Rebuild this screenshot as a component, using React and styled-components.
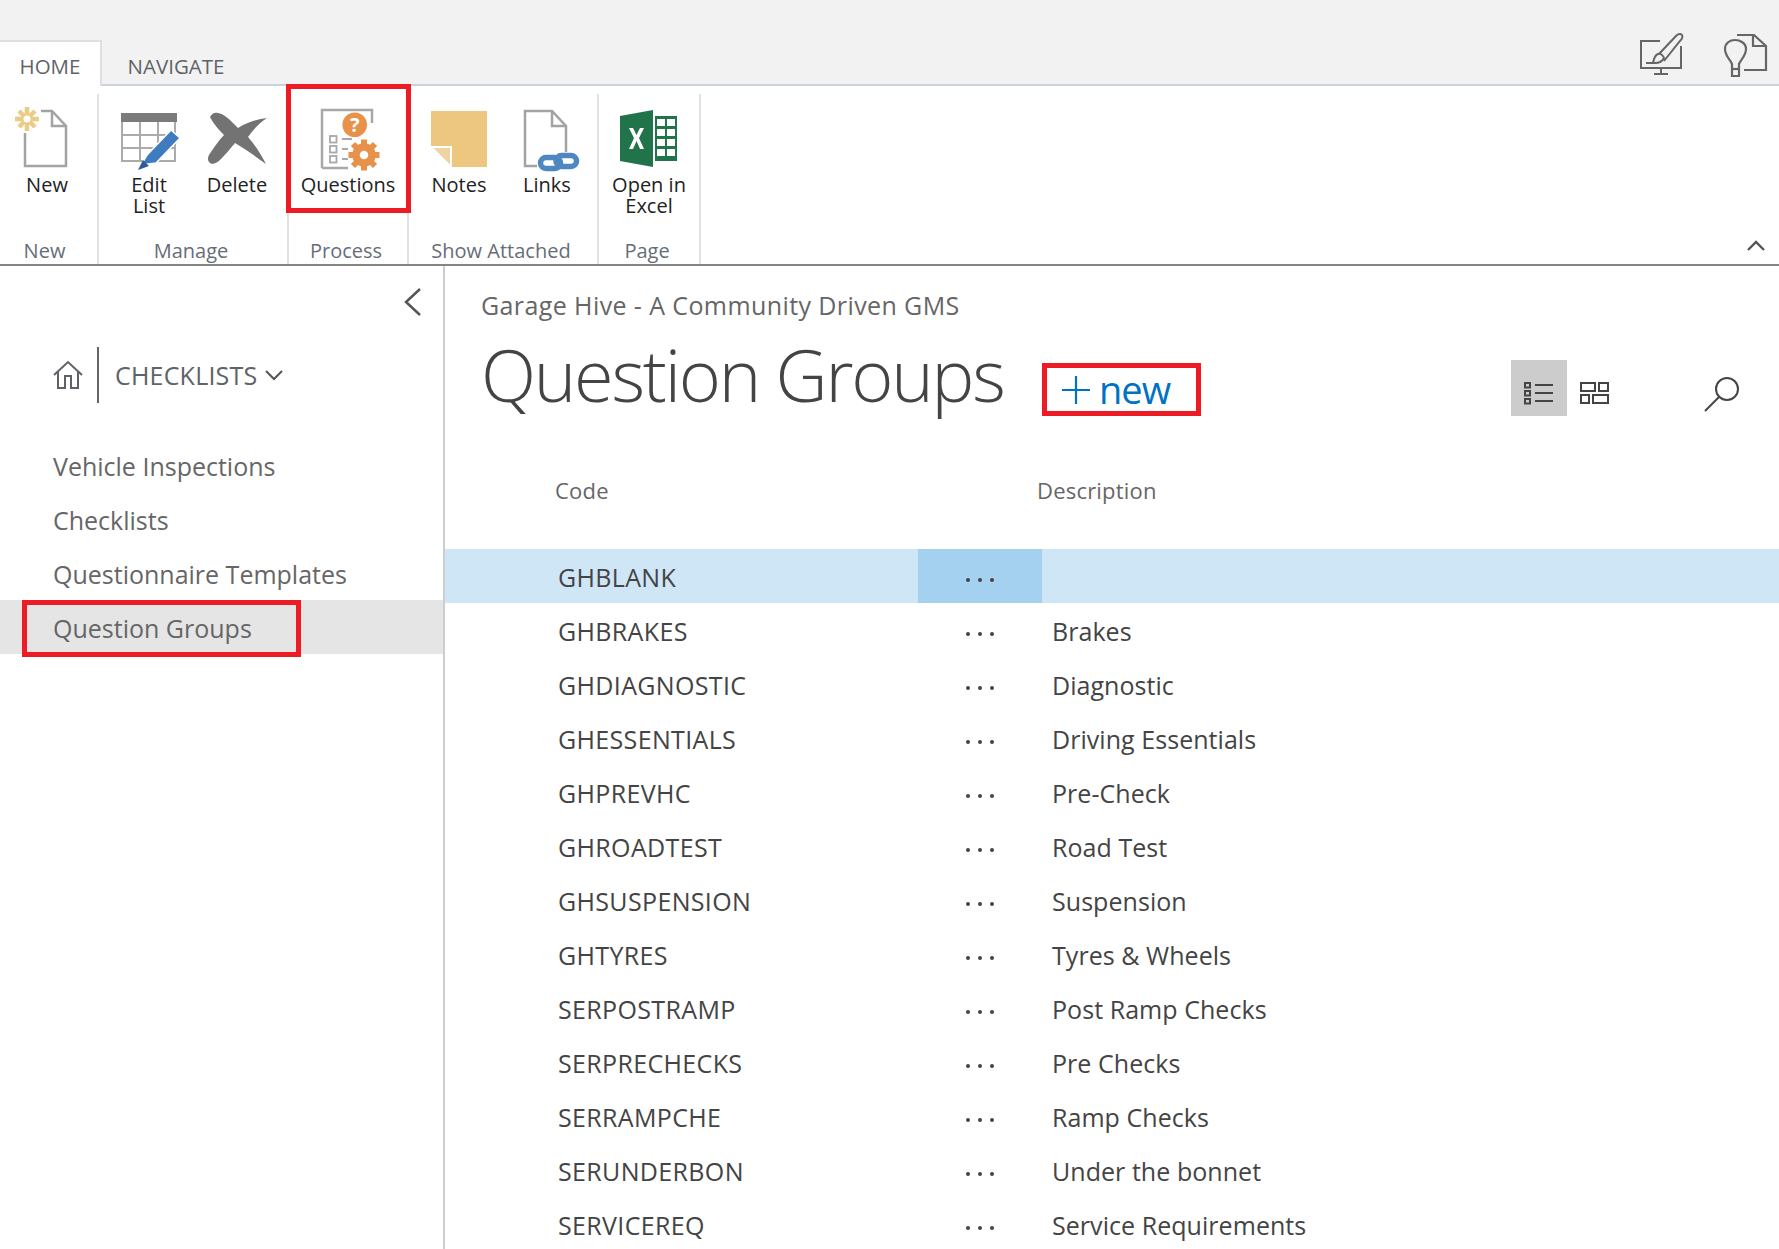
import styled, { createGlobalStyle } from "styled-components";

const GlobalStyle = createGlobalStyle`
  html, body {
    margin: 0;
    background: #fff;
    font-family: "Open Sans", "Liberation Sans", sans-serif;
    overflow: hidden;
  }
  * { box-sizing: border-box; }
  svg { overflow: visible; }
`;

const rows = [
  ["GHBLANK", ""],
  ["GHBRAKES", "Brakes"],
  ["GHDIAGNOSTIC", "Diagnostic"],
  ["GHESSENTIALS", "Driving Essentials"],
  ["GHPREVHC", "Pre-Check"],
  ["GHROADTEST", "Road Test"],
  ["GHSUSPENSION", "Suspension"],
  ["GHTYRES", "Tyres & Wheels"],
  ["SERPOSTRAMP", "Post Ramp Checks"],
  ["SERPRECHECKS", "Pre Checks"],
  ["SERRAMPCHE", "Ramp Checks"],
  ["SERUNDERBON", "Under the bonnet"],
  ["SERVICEREQ", "Service Requirements"],
];

const PageIcon = ({ children }) => (
  <svg width="60" height="62" viewBox="0 0 60 62" fill="none">
    <path d="M8 3H35L49 18V58H8Z" stroke="#a3a3a3" strokeWidth="2.5" />
    <path d="M35 3V18H49" stroke="#a3a3a3" strokeWidth="2.5" />
    {children}
  </svg>
);

const NewIcon = () => (
  <PageIcon>
    <rect x="-3" y="-1" width="27" height="26" fill="#fff" />
    <g stroke="#eccb86" strokeWidth="4.5">
      <path d="M10 -1V23M-2 11H22M2 3L18 19M18 3L2 19" />
    </g>
    <circle cx="10" cy="11" r="3.5" fill="#fff" />
  </PageIcon>
);

const LinksIcon = () => (
  <PageIcon>
    <rect x="20" y="44" width="43" height="19" fill="#fff" />
    <g fill="none" stroke="#4f87c1" strokeWidth="5.5">
      <rect x="23.5" y="49.5" width="20" height="11" rx="5.5" />
      <rect x="39" y="47.5" width="20.5" height="11" rx="5.5" />
    </g>
  </PageIcon>
);

const EditListIcon = () => (
  <svg width="62" height="60" viewBox="0 0 62 60" fill="none">
    <rect x="3" y="3" width="56" height="9" fill="#7b7b7b" />
    <path d="M4 12V51H57V12M4 25H57M4 38H57M22 12V51M40 12V51" stroke="#ababab" strokeWidth="2" />
    <path d="M23 55L29 45L53 20L62 28L38 53Z" fill="#3f7cbf" stroke="#fff" strokeWidth="1.5" />
    <path d="M20 60L25 50L31 56Z" fill="#2d5f96" />
  </svg>
);

const DeleteIcon = () => (
  <svg width="62" height="60" viewBox="0 0 62 60">
    <path
      d="M4 7C6 3 9 2 12 3C17 4 21 7 25 11L32 18C42 12 51 9 61 8C53 13 47 20 42 27C49 35 55 44 60 54C49 46 39 39 29 33C24 39 19 45 14 50C10 54 5 55 3 52C1 49 2 46 5 42C9 36 13 30 18 25C13 20 7 13 4 7Z"
      fill="#737373"
    />
  </svg>
);

const QuestionsIcon = () => (
  <svg width="60" height="64" viewBox="0 0 60 64" fill="none">
    <path d="M4 62V4H54V17M4 62H30" stroke="#a8a8a8" strokeWidth="2.5" />
    <g stroke="#a8a8a8" strokeWidth="1.8">
      <rect x="12" y="30" width="6.5" height="6.5" />
      <rect x="12" y="40" width="6.5" height="6.5" />
      <rect x="12" y="50" width="6.5" height="6.5" />
      <path d="M24 33H34M24 43H30M24 53H30" />
    </g>
    <circle cx="36.7" cy="18.7" r="12.3" fill="#e8914a" />
    <text x="36.7" y="26" textAnchor="middle" fontSize="20" fontWeight="700" fontFamily="Open Sans" fill="#fff">?</text>
    <circle cx="46" cy="49" r="8" stroke="#e8914a" strokeWidth="7.5" />
    <path
      d="M46 33.5V39M46 59V64.5M30.5 49H36M56 49H61.5M35 38L39 42M53 56L57 60M57 38L53 42M39 56L35 60"
      stroke="#e8914a"
      strokeWidth="6"
    />
  </svg>
);

const NotesIcon = () => (
  <svg width="58" height="60" viewBox="0 0 58 60">
    <path d="M1 1H57V57H22L1 37Z" fill="#edc77f" />
    <path d="M1 37H21V57Z" fill="#efd3a0" stroke="#fff" strokeWidth="2" />
  </svg>
);

const ExcelIcon = () => (
  <svg width="60" height="60" viewBox="0 0 60 60">
    <path d="M34 0V57L1 51V6Z" fill="#21734a" />
    <rect x="36" y="6" width="22" height="45" fill="#21734a" />
    <g fill="#fff">
      <rect x="38" y="9" width="8" height="7" />
      <rect x="48" y="9" width="8" height="7" />
      <rect x="38" y="19" width="8" height="7" />
      <rect x="48" y="19" width="8" height="7" />
      <rect x="38" y="29" width="8" height="7" />
      <rect x="48" y="29" width="8" height="7" />
      <rect x="38" y="39" width="8" height="7" />
      <rect x="48" y="39" width="8" height="7" />
    </g>
    <path d="M10 18L14 18L17.5 25L21 18L25 18L20 28L25 39H21L17.5 31L14 39H10L15 28Z" fill="#fff" />
  </svg>
);

const BrushIcon = () => (
  <svg width="44" height="44" viewBox="0 0 44 44" fill="none" stroke="#666" strokeWidth="2">
    <path d="M21 9H2V36H42V14M22 36V41M15 42H29" />
    <path d="M19 23L37 4C39 2 42 1 43 3C44 5 43 7 41 9L25 29" fill="#f2f2f2" />
    <path d="M7 31H16C22 31 24 28 25 26C24 23 21 21 19 22C16 23 15 26 14 31" fill="#f2f2f2" />
  </svg>
);

const BulbIcon = () => (
  <svg width="46" height="46" viewBox="0 0 46 46" fill="none" stroke="#666" strokeWidth="2.2">
    <path d="M14 3H31L43 14V38H21" />
    <path d="M30 3V14H43" />
    <path d="M9 32C7 27 2 24 2 17C2 11 7 8 12 8C17 8 23 11 23 17C23 24 18 27 16 32V44H9Z" fill="#f2f2f2" />
    <path d="M9 37H16" />
  </svg>
);

const HomeIcon = () => (
  <svg width="30" height="28" viewBox="0 0 30 28" fill="none" stroke="#5f6368" strokeWidth="2">
    <path d="M1 14L15 1L29 14M5 11V27H12V15H18V27H25V11" />
  </svg>
);

const ListViewIcon = () => (
  <svg width="30" height="24" viewBox="0 0 30 24" fill="none" stroke="#444" strokeWidth="2">
    <rect x="1" y="1" width="5" height="4.5" />
    <rect x="1" y="9" width="5" height="4.5" />
    <rect x="1" y="17" width="5" height="4.5" />
    <path d="M11 3H29M11 11H29M11 19H29" />
  </svg>
);

const TileViewIcon = () => (
  <svg width="30" height="24" viewBox="0 0 30 24" fill="none" stroke="#444" strokeWidth="2">
    <rect x="1" y="1" width="14" height="8" />
    <rect x="19" y="1" width="9" height="8" />
    <rect x="1" y="13" width="8" height="8" />
    <rect x="13" y="13" width="15" height="8" />
  </svg>
);

const SearchIcon = () => (
  <svg width="36" height="36" viewBox="0 0 36 36" fill="none" stroke="#444" strokeWidth="2">
    <circle cx="23" cy="13" r="11" />
    <path d="M15 21L1 35" />
  </svg>
);

export default function App() {
  return (
    <>
      <GlobalStyle />
      <Page>
        <TopBar>
          <Tab $active>HOME</Tab>
          <Tab>NAVIGATE</Tab>
          <TopIcons>
            <BrushIcon />
            <BulbIcon />
          </TopIcons>
        </TopBar>

        <Ribbon>
          <Group $width={99}>
            <Buttons>
              <RibbonButton $width={94}>
                <IconBox><NewIcon /></IconBox>
                <ButtonLabel>New</ButtonLabel>
              </RibbonButton>
            </Buttons>
            <GroupLabel $offset={-4}>New</GroupLabel>
          </Group>
          <Group $width={190}>
            <Buttons>
              <RibbonButton $width={100}>
                <IconBox><EditListIcon /></IconBox>
                <ButtonLabel>Edit<br />List</ButtonLabel>
              </RibbonButton>
              <RibbonButton $width={76}>
                <IconBox><DeleteIcon /></IconBox>
                <ButtonLabel>Delete</ButtonLabel>
              </RibbonButton>
            </Buttons>
            <GroupLabel $offset={-2}>Manage</GroupLabel>
          </Group>
          <Group $width={120}>
            <Buttons>
              <RibbonButton $width={120}>
                <IconBox><QuestionsIcon /></IconBox>
                <ButtonLabel>Questions</ButtonLabel>
              </RibbonButton>
            </Buttons>
            <Highlight />
            <GroupLabel $offset={-2}>Process</GroupLabel>
          </Group>
          <Group $width={190}>
            <Buttons>
              <RibbonButton $width={100}>
                <IconBox><NotesIcon /></IconBox>
                <ButtonLabel>Notes</ButtonLabel>
              </RibbonButton>
              <RibbonButton $width={76}>
                <IconBox><LinksIcon /></IconBox>
                <ButtonLabel>Links</ButtonLabel>
              </RibbonButton>
            </Buttons>
            <GroupLabel $offset={-2}>Show Attached</GroupLabel>
          </Group>
          <Group $width={102}>
            <Buttons>
              <RibbonButton $width={102}>
                <IconBox><ExcelIcon /></IconBox>
                <ButtonLabel>Open in<br />Excel</ButtonLabel>
              </RibbonButton>
            </Buttons>
            <GroupLabel $offset={-2}>Page</GroupLabel>
          </Group>
          <Collapse>
            <svg width="20" height="12" viewBox="0 0 20 12" fill="none" stroke="#555" strokeWidth="2.4">
              <path d="M2 11L10 3L18 11" />
            </svg>
          </Collapse>
        </Ribbon>

        <Main>
          <Sidebar>
            <BackRow>
              <svg width="18" height="28" viewBox="0 0 18 28" fill="none" stroke="#555" strokeWidth="2.5">
                <path d="M17 1L3 14L17 27" />
              </svg>
            </BackRow>
            <Breadcrumb>
              <HomeIcon />
              <Divider />
              <CrumbText>CHECKLISTS</CrumbText>
              <svg width="18" height="11" viewBox="0 0 18 11" fill="none" stroke="#555" strokeWidth="2">
                <path d="M1 1L9 9L17 1" />
              </svg>
            </Breadcrumb>
            <Nav>
              <NavItem>Vehicle Inspections</NavItem>
              <NavItem>Checklists</NavItem>
              <NavItem>Questionnaire Templates</NavItem>
              <NavItem $selected>
                Question Groups
                <NavHighlight />
              </NavItem>
            </Nav>
          </Sidebar>

          <Content>
            <Crumb>Garage Hive - A Community Driven GMS</Crumb>
            <TitleRow>
              <Title>Question Groups</Title>
              <NewButton>
                <svg width="28" height="28" viewBox="0 0 28 28" stroke="#0072c6" strokeWidth="2.2">
                  <path d="M14 0V28M0 14H28" />
                </svg>
                <span>new</span>
              </NewButton>
              <ViewTools>
                <ViewToggle $active><ListViewIcon /></ViewToggle>
                <ViewToggle><TileViewIcon /></ViewToggle>
                <SearchSlot><SearchIcon /></SearchSlot>
              </ViewTools>
            </TitleRow>
            <TableHead>
              <HeadCell $width={482}>Code</HeadCell>
              <HeadCell>Description</HeadCell>
            </TableHead>
            <Rows>
              {rows.map(([code, description], i) => (
                <Row key={code} $selected={i === 0}>
                  <CodeCell>{code}</CodeCell>
                  <DotsCell $selected={i === 0}>
                    <i /><i /><i />
                  </DotsCell>
                  <DescriptionCell>{description}</DescriptionCell>
                </Row>
              ))}
            </Rows>
          </Content>
        </Main>
      </Page>
    </>
  );
}

const Page = styled.div`
  height: 1249px;
  overflow: hidden;
  display: flex;
  flex-direction: column;
`;

const TopBar = styled.div`
  height: 86px;
  flex: none;
  display: flex;
  align-items: flex-end;
  background: #f2f2f2;
  border-bottom: 2px solid #cbd2dc;
`;

const Tab = styled.div`
  height: ${(p) => (p.$active ? 46 : 44)}px;
  width: ${(p) => (p.$active ? 102 : 148)}px;
  margin-bottom: ${(p) => (p.$active ? -2 : 0)}px;
  padding-top: ${(p) => (p.$active ? 9 : 11)}px;
  text-align: center;
  font-size: 20.5px;
  line-height: 30px;
  color: #5f6368;
  background: ${(p) => (p.$active ? "#fff" : "transparent")};
  border-top: ${(p) => (p.$active ? "2px solid #dcdfe3" : "none")};
  border-right: ${(p) => (p.$active ? "2px solid #dcdfe3" : "none")};
`;

const TopIcons = styled.div`
  margin-left: auto;
  align-self: flex-start;
  display: flex;
  gap: 40px;
  padding: 32px 10px 0 0;
`;

const Ribbon = styled.div`
  height: 180px;
  flex: none;
  display: flex;
  position: relative;
  padding-top: 8px;
  border-bottom: 2px solid #858585;
`;

const Group = styled.div`
  position: relative;
  width: ${(p) => p.$width}px;
  display: flex;
  flex-direction: column;
  border-right: 2px solid #e1e1e1;
`;

const Buttons = styled.div`
  flex: 1;
  display: flex;
  padding-top: 12px;
`;

const RibbonButton = styled.div`
  width: ${(p) => p.$width}px;
  text-align: center;
`;

const IconBox = styled.div`
  height: 64px;
  margin-bottom: 4px;
  display: flex;
  justify-content: center;
  align-items: flex-end;
`;

const ButtonLabel = styled.div`
  font-size: 20px;
  line-height: 21px;
  color: #222;
`;

const GroupLabel = styled.div`
  height: 28px;
  font-size: 20px;
  line-height: 30px;
  text-align: center;
  white-space: nowrap;
  color: #666d78;
  transform: translateX(${(p) => p.$offset || 0}px);
`;

const Highlight = styled.div`
  position: absolute;
  top: -10px;
  left: -3px;
  right: -4px;
  height: 129px;
  border: 5px solid #ed1c24;
  pointer-events: none;
`;

const Collapse = styled.div`
  position: absolute;
  right: 13px;
  bottom: 13px;
  line-height: 0;
`;

const Main = styled.div`
  flex: 1;
  display: flex;
  min-height: 0;
`;

const Sidebar = styled.div`
  width: 445px;
  flex: none;
  border-right: 2px solid #cdcdcd;
`;

const BackRow = styled.div`
  display: flex;
  justify-content: flex-end;
  padding: 22px 22px 0 0;
  line-height: 0;
`;

const Breadcrumb = styled.div`
  display: flex;
  align-items: center;
  margin-top: 31px;
  padding-left: 53px;
  height: 56px;
  color: #5f6368;
`;

const Divider = styled.div`
  width: 2px;
  height: 56px;
  margin: 0 16px 0 14px;
  background: #666;
`;

const CrumbText = styled.div`
  font-size: 25px;
  letter-spacing: 0.2px;
  margin-right: 8px;
`;

const Nav = styled.div`
  margin-top: 35px;
`;

const NavItem = styled.div`
  position: relative;
  height: 54px;
  padding: 1px 0 0 53px;
  font-size: 25px;
  line-height: 54px;
  color: #666;
  background: ${(p) => (p.$selected ? "#e5e5e5" : "transparent")};
`;

const NavHighlight = styled.div`
  position: absolute;
  top: 0;
  left: 22px;
  width: 279px;
  height: 57px;
  border: 5px solid #ed1c24;
`;

const Content = styled.div`
  flex: 1;
  min-width: 0;
`;

const Crumb = styled.div`
  margin-top: 21px;
  padding-left: 36px;
  font-size: 25px;
  line-height: 36px;
  letter-spacing: 0.4px;
  color: #666;
`;

const TitleRow = styled.div`
  display: flex;
  align-items: flex-start;
  height: 133px;
  padding-left: 36px;
`;

const Title = styled.div`
  width: 561px;
  margin-top: 6px;
  font-size: 72px;
  font-weight: 300;
  line-height: 90px;
  letter-spacing: -2.2px;
  white-space: nowrap;
  color: #444;
`;

const NewButton = styled.div`
  width: 159px;
  height: 53px;
  margin-top: 40px;
  display: flex;
  align-items: center;
  gap: 9px;
  padding-left: 15px;
  border: 5px solid #ed1c24;
  font-size: 38px;
  letter-spacing: -1px;
  color: #0072c6;
  line-height: 1;
  span { margin-top: -2px; }
`;

const ViewTools = styled.div`
  display: flex;
  margin-left: 310px;
  margin-top: 37px;
`;

const ViewToggle = styled.div`
  width: 56px;
  height: 56px;
  display: flex;
  align-items: center;
  justify-content: center;
  padding-top: 11px;
  background: ${(p) => (p.$active ? "#ccc" : "transparent")};
`;

const SearchSlot = styled.div`
  margin-left: 81px;
  padding-top: 16px;
  line-height: 0;
`;

const TableHead = styled.div`
  display: flex;
  height: 93px;
  padding-left: 110px;
  font-size: 22px;
  line-height: 28px;
  padding-top: 20px;
  letter-spacing: 0.2px;
  color: #666;
`;

const HeadCell = styled.div`
  width: ${(p) => (p.$width ? `${p.$width}px` : "auto")};
`;

const Rows = styled.div``;

const Row = styled.div`
  display: flex;
  height: 54px;
  align-items: center;
  font-size: 25px;
  letter-spacing: 0.05px;
  color: #444;
  background: ${(p) => (p.$selected ? "#cfe6f7" : "transparent")};
`;

const CodeCell = styled.div`
  width: 473px;
  padding: 2px 0 0 113px;
  letter-spacing: 0.35px;
`;

const DotsCell = styled.div`
  width: 124px;
  height: 100%;
  display: flex;
  align-items: center;
  justify-content: center;
  gap: 8px;
  padding-top: 8px;
  background: ${(p) => (p.$selected ? "#a5d1f1" : "transparent")};
  i {
    width: 4px;
    height: 4px;
    border-radius: 50%;
    background: #444;
  }
`;

const DescriptionCell = styled.div`
  padding: 2px 0 0 10px;
`;
